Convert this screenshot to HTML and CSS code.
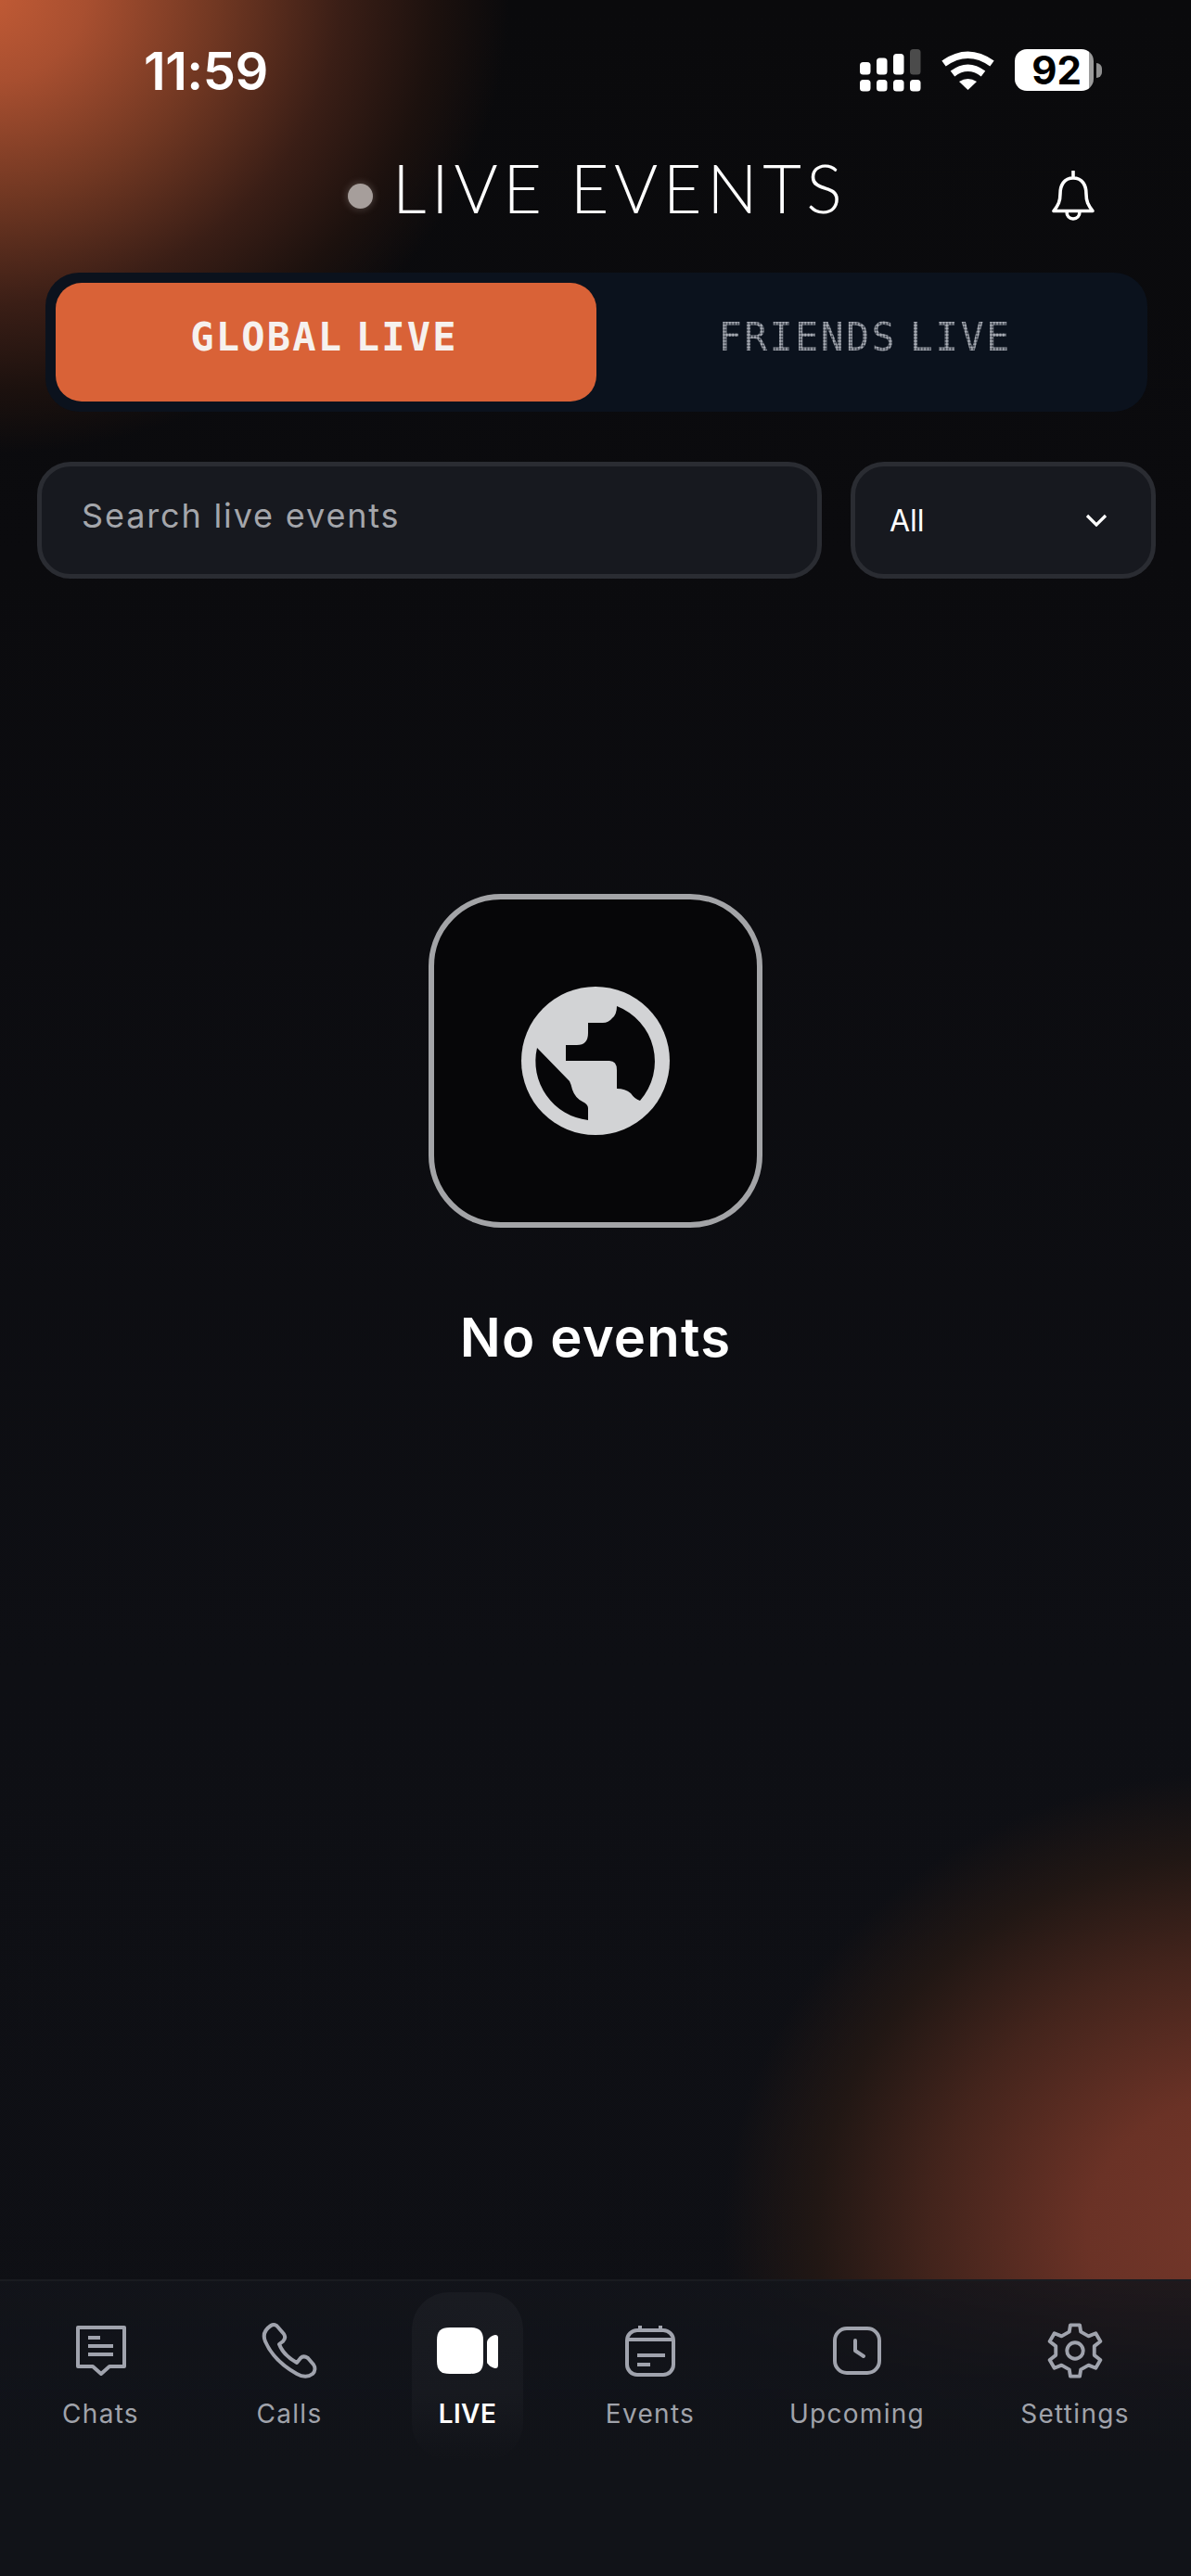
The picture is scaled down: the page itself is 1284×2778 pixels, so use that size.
FILE: index.html
```html
<!DOCTYPE html>
<html lang="en">
<head>
<meta charset="utf-8">
<title>Live Events</title>
<link rel="stylesheet" href="styles.css">
</head>
<body>
<div class="app">
  <div class="status">
    <span class="time">11:59</span>
    <div class="status-icons">
      <svg class="signal" viewBox="0 0 68 46" width="68" height="46">
        <g fill="#fff">
          <rect x="1" y="14" width="11.5" height="13.5" rx="3.5"/>
          <rect x="19" y="9.5" width="11.5" height="18" rx="3.5"/>
          <rect x="37" y="5" width="11.5" height="22.5" rx="3.5"/>
          <rect x="1" y="33" width="11.5" height="12.5" rx="3.5"/>
          <rect x="19" y="33" width="11.5" height="12.5" rx="3.5"/>
          <rect x="37" y="33" width="11.5" height="12.5" rx="3.5"/>
          <rect x="55" y="33" width="11.5" height="12.5" rx="3.5"/>
        </g>
        <rect x="55" y="0" width="11.5" height="27.5" rx="3.5" fill="#4b4b4b"/>
      </svg>
      <svg class="wifi" viewBox="0 0 59 42" width="59" height="42">
        <path d="M3.5 13.5Q29.5 -5 55.500 13.500" fill="none" stroke="#fff" stroke-width="7.500"/>
        <path d="M13 24.500Q29.500 12 46 24.500" fill="none" stroke="#fff" stroke-width="7.500"/>
        <path d="M20 33Q29.500 27 39 33L29.500 42Z" fill="#fff"/>
      </svg>
      <div class="battery"><span class="battery-num">92</span></div>
      <span class="battery-nub"></span>
    </div>
  </div>

  <header class="header">
    <div class="title-wrap">
      <span class="live-dot"></span>
      <h1 class="title">LIVE EVENTS</h1>
    </div>
    <svg class="bell" viewBox="0 0 46 54" width="46" height="54">
      <path d="M23 1V8M23 8C13 8 9 16 9 25C9 33 7 37 2 43.500H44C39 37 37 33 37 25C37 16 33 8 23 8ZM16 44C16 49 19 52 23 52C27 52 30 49 30 44" fill="none" stroke="#fff" stroke-width="3.600" stroke-linejoin="round" stroke-linecap="round"/>
    </svg>
  </header>

  <div class="tabs">
    <div class="tab tab-active">GLOBAL LIVE</div>
    <div class="tab"><span class="tab-dotted">FRIENDS LIVE</span></div>
  </div>

  <div class="filters">
    <div class="search">Search live events</div>
    <div class="select">
      <span>All</span>
      <svg viewBox="0 0 24 14" width="24" height="14"><path d="M2 2L12 12L22 2" fill="none" stroke="#fff" stroke-width="3.200"/></svg>
    </div>
  </div>

  <main class="empty">
    <div class="empty-box">
      <svg viewBox="0 0 160 160" width="160" height="160">
        <circle cx="80" cy="80" r="80" fill="#d2d3d5"/>
        <path d="M103 21Q103 30 98 34Q94 39 88 39H72V50Q72 63 60 63H48V80H95Q103 80 103 90V110Q112 110 118 115Q122 121 128 123A64 64 0 0 0 103 21Z" fill="#060608"/>
        <path d="M17 66L52 102Q54 106 55 111Q58 120 66 124Q72 127 72 131V144A64 64 0 0 1 17 66Z" fill="#060608"/>
      </svg>
    </div>
    <p class="empty-text">No events</p>
  </main>

  <nav class="nav">
    <div class="nav-item">
      <svg viewBox="0 0 56 56" width="56" height="56"><g fill="none" stroke="#a0a3ad" stroke-width="4"><path d="M3 3H53V45H37L28 53L19 45H3Z" stroke-linejoin="round"/><path d="M14 14H27M14 23H41M14 32H41"/></g></svg>
      <span class="nav-label">Chats</span>
    </div>
    <div class="nav-item">
      <svg viewBox="-2 -2 64 64" width="64" height="64"><path d="M10 3C13 1 16 2 18 5L24 12C26 15 25 18 23 20L19 23C22 31 29 38 38 43L42 38C44 36 47 36 50 38L56 45C58 48 58 52 55 55C50 59 45 59 38 55C22 46 10 34 4 20C1 13 4 7 10 3Z" fill="none" stroke="#a0a3ad" stroke-width="4" stroke-linejoin="round"/></svg>
      <span class="nav-label">Calls</span>
    </div>
    <div class="nav-item nav-item-active">
      <svg viewBox="0 0 66 50" width="66" height="50"><path d="M14 0H36C46 0 50 4 50 14V36C50 46 46 50 36 50H14C4 50 0 46 0 36V14C0 4 4 0 14 0Z" fill="#fff"/><path d="M63 8C65 8 66 9 66 11V40C66 43 65 44 63 44C60 44 54 40 54 37V16C54 12 60 8 63 8Z" fill="#fff"/></svg>
      <span class="nav-label nav-label-active">LIVE</span>
    </div>
    <div class="nav-item">
      <svg viewBox="0 0 56 56" width="56" height="56"><g fill="none" stroke="#a0a3ad" stroke-width="4"><rect x="3" y="6" width="50" height="48" rx="11"/><path d="M3 16H53M17 1V8M39 1V8"/><path d="M14 33H44M14 43H28"/></g></svg>
      <span class="nav-label">Events</span>
    </div>
    <div class="nav-item">
      <svg viewBox="0 0 56 56" width="56" height="56"><g fill="none" stroke="#a0a3ad" stroke-width="4"><rect x="4" y="4" width="48" height="48" rx="13"/><path d="M26 17V28L35 34" stroke-linecap="round" stroke-linejoin="round"/></g></svg>
      <span class="nav-label">Upcoming</span>
    </div>
    <div class="nav-item">
      <svg viewBox="-3 -3 66 66" width="64" height="64"><g fill="none" stroke="#a0a3ad" stroke-width="4" stroke-linejoin="round"><path d="M23.600 9L24.800 1.500H35.200L36.400 9L45 13.900L53 10.700L58.200 19.700L51.400 25V35L58.200 40.300L53 49.300L45 46.100L36.400 51L35.200 58.500H24.800L23.600 51L15 46.100L7 49.300L1.800 40.300L8.600 35V25L1.800 19.700L7 10.700L15 13.900Z"/><circle cx="30" cy="30" r="9"/></g></svg>
      <span class="nav-label">Settings</span>
    </div>
  </nav>
</div>
</body>
</html>
```

FILE: styles.css
```css
* { box-sizing: border-box; }

html, body {
  margin: 0;
  padding: 0;
  background: #0a0a0c;
}

.app {
  width: 1284px;
  height: 2778px;
  display: flex;
  flex-direction: column;
  overflow: hidden;
  color: #fff;
  font-family: Inter, "Liberation Sans", sans-serif;
  background:
    radial-gradient(ellipse 570px 500px at -20px -10px, #c45c36 0, #a84f30 20%, #703722 45%, #3a1e16 68%, #1c110e 86%, rgba(16,10,10,0) 100%),
    radial-gradient(ellipse 560px 500px at 1340px 2410px, #74372a 0, #6a3226 30%, #43241c 60%, #211714 82%, rgba(16,15,20,0) 100%),
    linear-gradient(180deg, #0a0a0c 0, #0b0b0e 600px, #0e0f14 1800px, #0f1015 100%);
}

/* status bar */
.status {
  height: 150px;
  padding: 53px 96px 0 155px;
  display: flex;
  justify-content: space-between;
  align-items: flex-start;
  flex: none;
}

.time {
  font-size: 56px;
  line-height: 48px;
  font-weight: 600;
  letter-spacing: -0.5px;
}

.status-icons {
  display: flex;
  align-items: flex-start;
}

.wifi { margin: 2px 21px 0 20px; }

.battery {
  width: 85px;
  height: 45px;
  border-radius: 13px;
  background: linear-gradient(90deg, #fff 0, #fff 94%, #9c9c9c 94%, #9c9c9c 100%);
  display: flex;
  align-items: center;
  justify-content: center;
}

.battery-num {
  color: #000;
  font-size: 42px;
  line-height: 45px;
  font-weight: 700;
  padding-left: 5px;
}

.battery-nub {
  width: 6px;
  height: 16px;
  margin: 15px 0 0 3px;
  border-radius: 0 8px 8px 0;
  background: #8f8f8f;
}

/* header */
.header {
  height: 110px;
  flex: none;
  display: flex;
  align-items: center;
  justify-content: space-between;
  padding: 0 104px 0 375px;
}

.title-wrap {
  display: flex;
  align-items: center;
  gap: 21px;
}

.live-dot {
  width: 27px;
  height: 27px;
  border-radius: 50%;
  background: #a69e9b;
  box-shadow: 0 0 8px rgba(200, 190, 185, 0.35);
  margin-top: 12px;
}

.title {
  margin: 0 0 6px;
  font-family: Lato, "Liberation Sans", sans-serif;
  font-weight: 300;
  font-size: 72px;
  line-height: 80px;
  letter-spacing: 5.600px;
}

.bell { margin-top: 11px; }

/* tabs */
.tabs {
  flex: none;
  margin: 34px 47px 0 49px;
  height: 150px;
  padding: 11px;
  border-radius: 36px;
  background: #0b121d;
  display: grid;
  grid-template-columns: 583px 1fr;
}

.tab {
  display: flex;
  align-items: center;
  justify-content: center;
  padding: 0 4px 12px 0;
  font-family: "DejaVu Sans Mono", "Liberation Mono", monospace;
  font-size: 42px;
  letter-spacing: 2.200px;
  word-spacing: -14px;
}

.tab-active {
  background: #d96237;
  border-radius: 28px;
  font-weight: 700;
  color: #f6f1ee;
}

.tab-dotted {
  font-weight: 400;
  color: transparent;
  background-image: radial-gradient(circle, #aeb2ba 0, #aeb2ba 45%, rgba(120, 125, 135, 0.3) 80%);
  background-size: 3.400px 3.400px;
  -webkit-background-clip: text;
  background-clip: text;
}

/* filters */
.filters {
  flex: none;
  margin: 54px 38px 0 40px;
  display: flex;
  gap: 31px;
  height: 126px;
}

.search, .select {
  border: 5px solid #2a2c32;
  border-radius: 36px;
  background: #17191f;
  display: flex;
  align-items: center;
}

.search {
  flex: 1;
  padding: 0 0 10px 43px;
  font-size: 36px;
  letter-spacing: 1.850px;
  color: #a4a6ab;
}

.select {
  width: 329px;
  padding: 0 47px 0 37px;
  justify-content: space-between;
  font-size: 32px;
}

/* empty state */
.empty {
  flex: 1;
  display: flex;
  flex-direction: column;
  align-items: center;
  padding-top: 340px;
}

.empty-box {
  width: 360px;
  height: 360px;
  border: 6px solid #a3a4a7;
  border-radius: 78px;
  background: #060608;
  display: flex;
  align-items: center;
  justify-content: center;
}

.empty-text {
  margin: 84px 0 0;
  font-size: 58px;
  line-height: 68px;
  font-weight: 600;
  letter-spacing: 1.200px;
}

/* bottom nav */
.nav {
  flex: none;
  height: 320px;
  padding: 12px 13px 0 0;
  border-top: 2px solid rgba(255, 255, 255, 0.035);
  background: linear-gradient(180deg, rgba(18, 20, 26, 0.86) 0, rgba(17, 19, 25, 0.97) 110px, #111318 200px);
  display: grid;
  grid-template-columns: 217px 190px 194px 200px 246px 1fr;
  align-items: start;
}

.nav-item {
  display: flex;
  flex-direction: column;
  align-items: center;
  height: 181px;
  padding-top: 31px;
}

.nav-item svg {
  height: 64px;
  flex: none;
}

.nav-item-active {
  justify-self: center;
  width: 120px;
  border-radius: 40px;
  background: linear-gradient(180deg, #191b21 0, #17191f 60%, rgba(23, 25, 31, 0));
}

.nav-label {
  margin-top: 18px;
  font-size: 28px;
  line-height: 36px;
  letter-spacing: 1.300px;
  color: #a0a3ab;
}

.nav-label-active {
  color: #fff;
  font-weight: 600;
  letter-spacing: 0.400px;
}
```
